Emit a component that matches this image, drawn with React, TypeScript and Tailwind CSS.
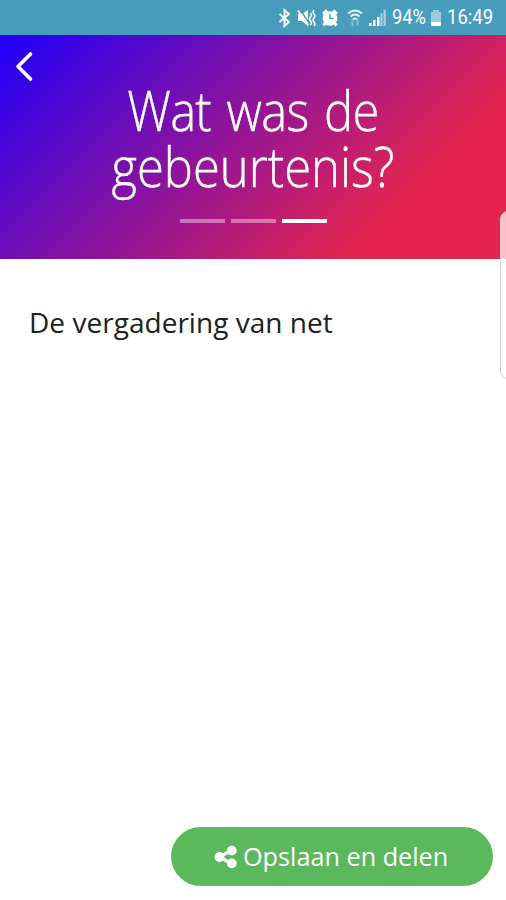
import React from "react";

function StatusBar() {
  return (
    <div className="flex h-[35px] items-center bg-[#489dbd] pl-[277px] font-['Roboto',sans-serif] text-white">
      <svg width="114" height="24" viewBox="277 5 114 24" fill="none" className="shrink-0">
        <path d="M279.500 13L289 21L284.500 25V9L289 13L279.500 21" stroke="#fff" strokeWidth="1.900" />
        <path d="M298 13h4l6-4v16l-6-5h-4z" fill="#fff" />
        <path d="M300 8.500l10 15" stroke="#489dbd" strokeWidth="1.400" />
        <path d="M298 9.500l10.500 15" stroke="#fff" strokeWidth="1.800" />
        <path d="M310.500 12q2 2 0 4t0 4t0 4M314 9q-2 2 0 4t0 4t0 4t0 4" stroke="#fff" strokeWidth="1.500" />
        <circle cx="330" cy="17.500" r="7.300" fill="#fff" />
        <path d="M323 13l4-3.500M337 13l-4-3.500M325.500 22l-2 2.500M334.500 22l2 2.500" stroke="#fff" strokeWidth="3" />
        <path d="M330 13v4.500h3.500" stroke="#489dbd" strokeWidth="1.400" />
        <path d="M348 12.500q7-6 14 0M350.500 15.500q4.500-4 9 0M353 18.500q2-2 4 0" stroke="#e3f1f6" strokeWidth="2" />
        <path d="M352.500 18v7M357.500 25v-7" stroke="#83bdd2" strokeWidth="2" />
        <path d="M369 22h2.500v3H369zM373 19h2.500v6H373zM377 16h2.500v9H377z" fill="#fff" />
        <path d="M380.500 12h2v13h-2zM383.500 9h2.300v16h-2.300z" fill="#a9d1df" />
      </svg>
      <span className="ml-[1px] w-[38px] whitespace-nowrap text-[21px] leading-[35px]">
        <span className="inline-block origin-left scale-x-[0.87]">94%</span>
      </span>
      <svg width="12" height="18" viewBox="0 0 12 18" className="shrink-0">
        <path d="M3 1h6v2h2v14H1V3h2z" fill="#9bcbdc" />
        <path d="M1 13h10v4H1z" fill="#fff" />
      </svg>
      <span className="ml-[5px] w-[48px] whitespace-nowrap text-[21px] leading-[35px]">
        <span className="inline-block origin-left scale-x-[0.88]">16:49</span>
      </span>
    </div>
  );
}

function Header() {
  return (
    <header className="relative flex h-[224px] flex-col items-center bg-[linear-gradient(135deg,#2600f5_3%,#e6254f_78%)] pt-[47px] text-white">
      <svg width="20" height="32" viewBox="0 0 20 32" fill="none" className="absolute left-[14px] top-[15px]">
        <path d="M16.500 4L4 16.500L16.500 29" stroke="#fff" strokeWidth="3.600" strokeLinecap="round" strokeLinejoin="round" />
      </svg>
      <h1 className="scale-x-[0.89] whitespace-nowrap text-center font-['Open_Sans',sans-serif] text-[55px] font-light leading-[56px] [-webkit-text-stroke:0.4px_white]">
        <span className="tracking-[-0.8px] [word-spacing:4px]">Wat was de</span>
        <br />
        gebeurtenis?
      </h1>
      <div className="mt-[25px] flex gap-[6px]">
        <span className="h-[4px] w-[45px] bg-white/40" />
        <span className="h-[4px] w-[45px] bg-white/40" />
        <span className="h-[4px] w-[45px] bg-white" />
      </div>
    </header>
  );
}

export default function App() {
  return (
    <div className="relative flex h-[900px] w-[506px] flex-col overflow-hidden bg-white font-['Open_Sans',sans-serif]">
      <StatusBar />
      <Header />
      <main className="flex-1 px-[29px] pt-[43px]">
        <p className="text-[28px] leading-[40px] tracking-[0.03px] text-[#202020]">De vergadering van net</p>
      </main>
      <button className="mb-[14px] mr-[13px] flex h-[59px] w-[322px] items-center self-end rounded-full bg-[#5cb85c] pl-[43px] text-white">
        <svg width="23" height="24" viewBox="0 0 23 24" className="shrink-0">
          <path d="M17.500 5.500L5 12L17.500 18.500" fill="none" stroke="#fff" strokeWidth="3.200" />
          <circle cx="5.500" cy="12" r="4.900" fill="#fff" />
          <circle cx="17.800" cy="5.600" r="4.900" fill="#fff" />
          <circle cx="17.800" cy="18.400" r="4.900" fill="#fff" />
        </svg>
        <span className="mb-[2px] ml-[6px] origin-left scale-x-[0.97] whitespace-nowrap text-[26px] leading-[36px]">Opslaan en delen</span>
      </button>
      <div className="absolute left-[500px] top-[211px] h-[168px] w-[20px] rounded-[8px] border border-[#cccccc] bg-white/70" />
    </div>
  );
}
